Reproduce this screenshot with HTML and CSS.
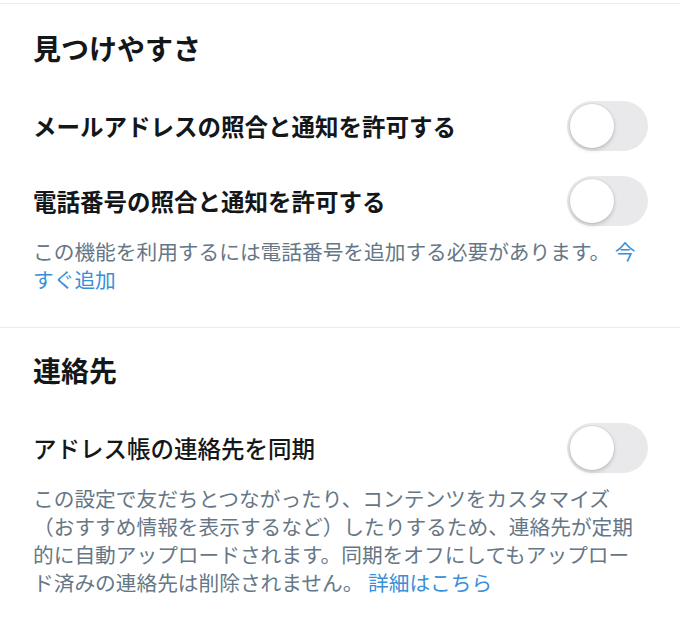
FILE: index.html
```html
<!DOCTYPE html>
<html lang="ja">
<head>
<meta charset="utf-8">
<link rel="stylesheet" href="styles.css">
</head>
<body>
<div class="topline"></div>
<section class="section first">
  <h2 class="heading">見つけやすさ</h2>
  <div class="row">
    <span class="label">メールアドレスの照合と通知を許可する</span>
    <span class="toggle"><span class="knob"></span></span>
  </div>
  <div class="row row-next">
    <span class="label">電話番号の照合と通知を許可する</span>
    <span class="toggle"><span class="knob"></span></span>
  </div>
  <p class="desc">この機能を利用するには電話番号を追加する必要があります。 <a class="link">今すぐ追加</a></p>
</section>
<section class="section second">
  <h2 class="heading">連絡先</h2>
  <div class="row">
    <span class="label label-medium">アドレス帳の連絡先を同期</span>
    <span class="toggle"><span class="knob"></span></span>
  </div>
  <p class="desc">この設定で友だちとつながったり、コンテンツをカスタマイズ（おすすめ情報を表示するなど）したりするため、連絡先が定期的に自動アップロードされます。同期をオフにしてもアップロード済みの連絡先は削除されません。 <a class="link">詳細はこちら</a></p>
</section>
</body>
</html>
```

FILE: styles.css
```css
html, body {
  margin: 0;
  padding: 0;
  background: #ffffff;
}
body {
  font-family: "Noto Sans CJK JP", "Noto Sans", sans-serif;
  color: #14171a;
  width: 680px;
}
.topline {
  height: 3px;
  border-bottom: 1px solid #e8ecef;
}
.section {
  padding: 0 32px 0 33px;
}
.section.first {
  padding-top: 26px;
  padding-bottom: 34px;
  border-bottom: 1px solid #e8ecef;
}
.section.second {
  padding-top: 24px;
}
.heading {
  margin: 0 0 35px 0;
  font-size: 28px;
  line-height: 36px;
  font-weight: 700;
}
.row {
  display: flex;
  align-items: center;
  justify-content: space-between;
  height: 50px;
}
.row-next {
  margin-top: 25px;
}
.label {
  font-size: 23.5px;
  font-weight: 700;
  line-height: 30px;
}
.label-medium {
  font-weight: 500;
}
.toggle {
  display: flex;
  align-items: center;
  box-sizing: border-box;
  width: 81px;
  height: 50px;
  padding: 0 3px;
  border-radius: 25px;
  background: #e9e9eb;
  flex-shrink: 0;
}
.knob {
  width: 44px;
  height: 44px;
  border-radius: 50%;
  background: #ffffff;
  box-shadow: 0 2px 4px rgba(0,0,0,0.18), 0 0 0 1px rgba(0,0,0,0.04);
}
.desc {
  margin: 11px 0 0 0;
  font-size: 20.7px;
  line-height: 28px;
  color: #657786;
}
.link {
  color: #3a8fd8;
  text-decoration: none;
}
```
